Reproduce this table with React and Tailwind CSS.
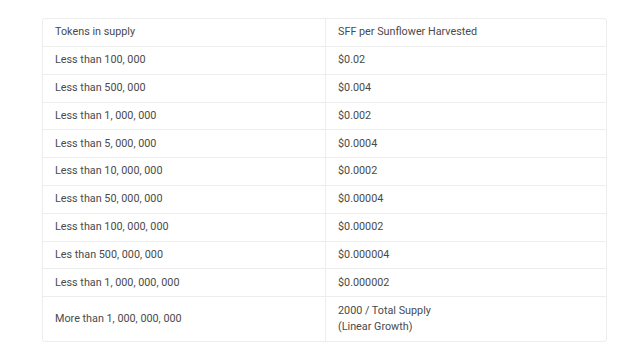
export default function App() {
  const rows = [
    ["Less than 100, 000", "$0.02"],
    ["Less than 500, 000", "$0.004"],
    ["Less than 1, 000, 000", "$0.002"],
    ["Less than 5, 000, 000", "$0.0004"],
    ["Less than 10, 000, 000", "$0.0002"],
    ["Less than 50, 000, 000", "$0.00004"],
    ["Less than 100, 000, 000", "$0.00002"],
    ["Les than 500, 000, 000", "$0.000004"],
    ["Less than 1, 000, 000, 000", "$0.000002"],
  ];
  return (
    <div className="w-[640px] h-[360px] bg-white pt-[18px] pl-[42px]" style={{ fontFamily: "Roboto, sans-serif" }}>
      <div className="w-[565px] border border-[#ededed] rounded-[3px] text-[10.8px] text-[#4a4a4a]">
        <div className="flex h-[28px] border-b border-[#ededed]">
          <div className="w-[283px] pl-[12px] flex items-center border-r border-[#ededed]">Tokens in supply</div>
          <div className="flex-1 pl-[12px] flex items-center">SFF per Sunflower Harvested</div>
        </div>
        {rows.map((r, i) => (
          <div key={i} className="flex h-[27.8px] border-b border-[#ededed]">
            <div className="w-[283px] pl-[12px] flex items-center border-r border-[#ededed]">{r[0]}</div>
            <div className="flex-1 pl-[12px] flex items-center">{r[1]}</div>
          </div>
        ))}
        <div className="flex h-[44px]">
          <div className="w-[283px] pl-[12px] flex items-center border-r border-[#ededed]">More than 1, 000, 000, 000</div>
          <div className="flex-1 pl-[12px] flex flex-col justify-center leading-[16px]">
            <span>2000 / Total Supply</span>
            <span>(Linear Growth)</span>
          </div>
        </div>
      </div>
    </div>
  );
}
